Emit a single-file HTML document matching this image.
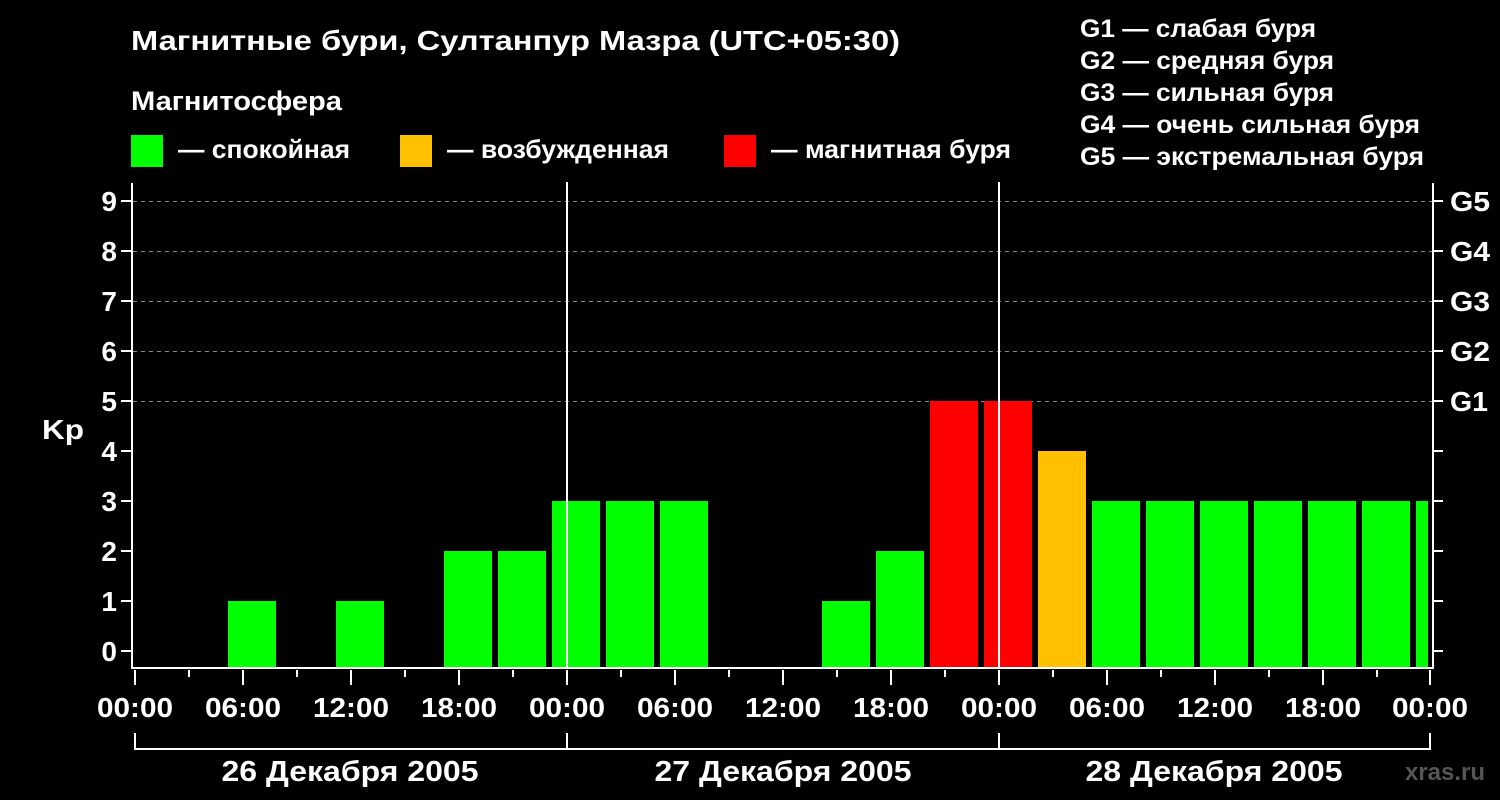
<!DOCTYPE html>
<html><head><meta charset="utf-8"><style>
html,body{margin:0;padding:0;background:#000;}
svg{display:block;}
text{font-family:"Liberation Sans",sans-serif;font-weight:bold;fill:#fff;}
</style></head><body>
<svg width="1500" height="800" xmlns="http://www.w3.org/2000/svg">
<rect width="1500" height="800" fill="#000"/>
<text x="131" y="50" font-size="28" textLength="769" lengthAdjust="spacingAndGlyphs">Магнитные бури, Султанпур Мазра (UTC+05:30)</text>
<text x="131" y="110" font-size="27" textLength="211" lengthAdjust="spacingAndGlyphs">Магнитосфера</text>
<rect x="131" y="135" width="32" height="32" fill="#00ff00"/>
<text x="178" y="158" font-size="26" textLength="172" lengthAdjust="spacingAndGlyphs">— спокойная</text>
<rect x="400" y="135" width="32" height="32" fill="#ffc000"/>
<text x="447" y="158" font-size="26" textLength="222" lengthAdjust="spacingAndGlyphs">— возбужденная</text>
<rect x="724" y="135" width="32" height="32" fill="#ff0000"/>
<text x="771" y="158" font-size="26" textLength="240" lengthAdjust="spacingAndGlyphs">— магнитная буря</text>
<g font-size="25">
<text x="1080" y="37" textLength="236" lengthAdjust="spacingAndGlyphs">G1 — слабая буря</text>
<text x="1080" y="69" textLength="254" lengthAdjust="spacingAndGlyphs">G2 — средняя буря</text>
<text x="1080" y="101" textLength="254" lengthAdjust="spacingAndGlyphs">G3 — сильная буря</text>
<text x="1080" y="133" textLength="340" lengthAdjust="spacingAndGlyphs">G4 — очень сильная буря</text>
<text x="1080" y="165" textLength="344" lengthAdjust="spacingAndGlyphs">G5 — экстремальная буря</text>
</g>
<g stroke="#888" stroke-dasharray="4,4" stroke-width="1">
<line x1="133" y1="201.5" x2="1432" y2="201.5"/>
<line x1="133" y1="251.5" x2="1432" y2="251.5"/>
<line x1="133" y1="301.5" x2="1432" y2="301.5"/>
<line x1="133" y1="351.5" x2="1432" y2="351.5"/>
<line x1="133" y1="401.5" x2="1432" y2="401.5"/>
</g>
<g>
<rect x="228" y="601" width="48" height="67" fill="#00ff00"/>
<rect x="336" y="601" width="48" height="67" fill="#00ff00"/>
<rect x="444" y="551" width="48" height="117" fill="#00ff00"/>
<rect x="498" y="551" width="48" height="117" fill="#00ff00"/>
<rect x="552" y="501" width="48" height="167" fill="#00ff00"/>
<rect x="606" y="501" width="48" height="167" fill="#00ff00"/>
<rect x="660" y="501" width="48" height="167" fill="#00ff00"/>
<rect x="822" y="601" width="48" height="67" fill="#00ff00"/>
<rect x="876" y="551" width="48" height="117" fill="#00ff00"/>
<rect x="930" y="401" width="48" height="267" fill="#ff0000"/>
<rect x="984" y="401" width="48" height="267" fill="#ff0000"/>
<rect x="1038" y="451" width="48" height="217" fill="#ffc000"/>
<rect x="1092" y="501" width="48" height="167" fill="#00ff00"/>
<rect x="1146" y="501" width="48" height="167" fill="#00ff00"/>
<rect x="1200" y="501" width="48" height="167" fill="#00ff00"/>
<rect x="1254" y="501" width="48" height="167" fill="#00ff00"/>
<rect x="1308" y="501" width="48" height="167" fill="#00ff00"/>
<rect x="1362" y="501" width="48" height="167" fill="#00ff00"/>
<rect x="1416" y="501" width="12" height="167" fill="#00ff00"/>
</g>
<g stroke="#fff" stroke-width="2" fill="none">
<polyline points="132,183 132,668 1433,668 1433,183"/>
<line x1="567" y1="182" x2="567" y2="668"/>
<line x1="999" y1="182" x2="999" y2="668"/>
</g>
<g stroke="#fff" stroke-width="2">
<line x1="121" y1="201" x2="131" y2="201"/><line x1="121" y1="251" x2="131" y2="251"/>
<line x1="121" y1="301" x2="131" y2="301"/><line x1="121" y1="351" x2="131" y2="351"/>
<line x1="121" y1="401" x2="131" y2="401"/><line x1="121" y1="451" x2="131" y2="451"/>
<line x1="121" y1="501" x2="131" y2="501"/><line x1="121" y1="551" x2="131" y2="551"/>
<line x1="121" y1="601" x2="131" y2="601"/><line x1="121" y1="651" x2="131" y2="651"/>
<line x1="1434" y1="201" x2="1443" y2="201"/><line x1="1434" y1="251" x2="1443" y2="251"/>
<line x1="1434" y1="301" x2="1443" y2="301"/><line x1="1434" y1="351" x2="1443" y2="351"/>
<line x1="1434" y1="401" x2="1443" y2="401"/><line x1="1434" y1="451" x2="1443" y2="451"/>
<line x1="1434" y1="501" x2="1443" y2="501"/><line x1="1434" y1="551" x2="1443" y2="551"/>
<line x1="1434" y1="601" x2="1443" y2="601"/><line x1="1434" y1="651" x2="1443" y2="651"/>
</g>
<g font-size="28" text-anchor="end">
<text x="117" y="211">9</text><text x="117" y="261">8</text><text x="117" y="311">7</text>
<text x="117" y="361">6</text><text x="117" y="411">5</text><text x="117" y="461">4</text>
<text x="117" y="511">3</text><text x="117" y="561">2</text><text x="117" y="611">1</text>
<text x="117" y="661">0</text>
</g>
<text x="42" y="439" font-size="28" textLength="42" lengthAdjust="spacingAndGlyphs">Kp</text>
<g font-size="28">
<text x="1450" y="211" textLength="40" lengthAdjust="spacingAndGlyphs">G5</text><text x="1450" y="261" textLength="40" lengthAdjust="spacingAndGlyphs">G4</text><text x="1450" y="311" textLength="40" lengthAdjust="spacingAndGlyphs">G3</text>
<text x="1450" y="361" textLength="40" lengthAdjust="spacingAndGlyphs">G2</text><text x="1450" y="411" textLength="38" lengthAdjust="spacingAndGlyphs">G1</text>
</g>
<g stroke="#fff" stroke-width="2">
<line x1="135" y1="670" x2="135" y2="685"/><line x1="189" y1="670" x2="189" y2="677"/>
<line x1="243" y1="670" x2="243" y2="685"/><line x1="297" y1="670" x2="297" y2="677"/>
<line x1="351" y1="670" x2="351" y2="685"/><line x1="405" y1="670" x2="405" y2="677"/>
<line x1="459" y1="670" x2="459" y2="685"/><line x1="513" y1="670" x2="513" y2="677"/>
<line x1="567" y1="670" x2="567" y2="685"/><line x1="621" y1="670" x2="621" y2="677"/>
<line x1="675" y1="670" x2="675" y2="685"/><line x1="729" y1="670" x2="729" y2="677"/>
<line x1="783" y1="670" x2="783" y2="685"/><line x1="837" y1="670" x2="837" y2="677"/>
<line x1="891" y1="670" x2="891" y2="685"/><line x1="945" y1="670" x2="945" y2="677"/>
<line x1="999" y1="670" x2="999" y2="685"/><line x1="1053" y1="670" x2="1053" y2="677"/>
<line x1="1107" y1="670" x2="1107" y2="685"/><line x1="1161" y1="670" x2="1161" y2="677"/>
<line x1="1215" y1="670" x2="1215" y2="685"/><line x1="1269" y1="670" x2="1269" y2="677"/>
<line x1="1323" y1="670" x2="1323" y2="685"/><line x1="1377" y1="670" x2="1377" y2="677"/>
<line x1="1430" y1="670" x2="1430" y2="685"/>
</g>
<g font-size="28" text-anchor="middle">
<text x="135" y="717" textLength="76" lengthAdjust="spacingAndGlyphs">00:00</text><text x="243" y="717" textLength="76" lengthAdjust="spacingAndGlyphs">06:00</text><text x="351" y="717" textLength="76" lengthAdjust="spacingAndGlyphs">12:00</text>
<text x="459" y="717" textLength="76" lengthAdjust="spacingAndGlyphs">18:00</text><text x="567" y="717" textLength="76" lengthAdjust="spacingAndGlyphs">00:00</text><text x="675" y="717" textLength="76" lengthAdjust="spacingAndGlyphs">06:00</text>
<text x="783" y="717" textLength="76" lengthAdjust="spacingAndGlyphs">12:00</text><text x="891" y="717" textLength="76" lengthAdjust="spacingAndGlyphs">18:00</text><text x="999" y="717" textLength="76" lengthAdjust="spacingAndGlyphs">00:00</text>
<text x="1107" y="717" textLength="76" lengthAdjust="spacingAndGlyphs">06:00</text><text x="1215" y="717" textLength="76" lengthAdjust="spacingAndGlyphs">12:00</text><text x="1323" y="717" textLength="76" lengthAdjust="spacingAndGlyphs">18:00</text>
<text x="1430" y="717" textLength="76" lengthAdjust="spacingAndGlyphs">00:00</text>
</g>
<g stroke="#fff" stroke-width="2" fill="none">
<polyline points="135,733 135,749 1430,749 1430,733"/>
<line x1="567" y1="733" x2="567" y2="749"/>
<line x1="999" y1="733" x2="999" y2="749"/>
</g>
<g font-size="29" text-anchor="middle">
<text x="350" y="781" textLength="257" lengthAdjust="spacingAndGlyphs">26 Декабря 2005</text>
<text x="783" y="781" textLength="257" lengthAdjust="spacingAndGlyphs">27 Декабря 2005</text>
<text x="1214" y="781" textLength="257" lengthAdjust="spacingAndGlyphs">28 Декабря 2005</text>
</g>
<text x="1485" y="780" font-size="24" text-anchor="end" style="fill:#555">xras.ru</text>
</svg>
</body></html>
